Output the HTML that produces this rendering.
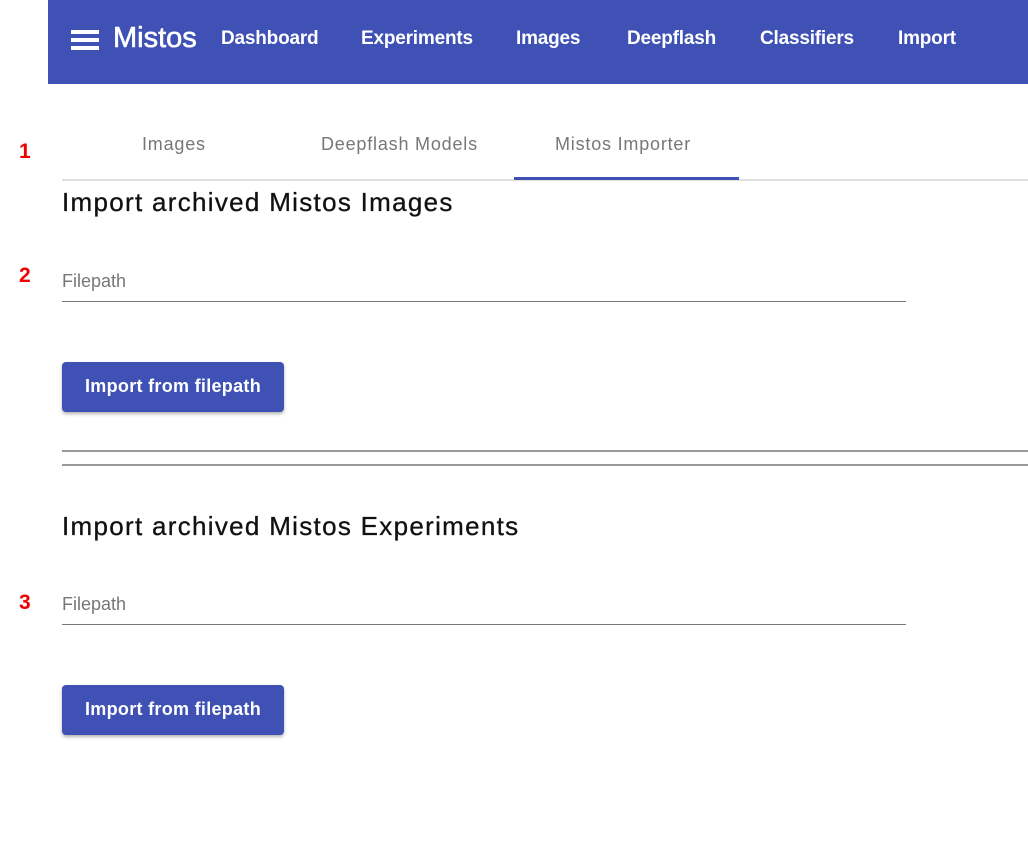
<!DOCTYPE html>
<html><head><style>
body{margin:0;width:1028px;height:857px;background:#fff;font-family:"Liberation Sans",sans-serif;position:relative;overflow:hidden}
.bar{position:absolute;left:48px;top:0;width:980px;height:84px;background:#3f51b5}
.t{position:absolute;white-space:nowrap}
.nav{color:#fff;font-weight:bold;font-size:19px;top:28px;letter-spacing:-0.2px}
.num{color:#e00;font-weight:bold;font-size:21px}
.tab{color:#777;font-size:18px;top:134px;letter-spacing:0.8px}
h2{position:absolute;margin:0;font-weight:normal;font-size:26px;letter-spacing:1.3px;color:#111;left:62px;-webkit-text-stroke:0.3px #111}
.lbl{color:#777;font-size:18px;left:62px}
.line{position:absolute;left:62px;width:844px;height:1px;background:#777}
.btn{position:absolute;left:62px;width:222px;height:50px;background:#3f51b5;border-radius:4px;color:#fff;font-weight:bold;font-size:18px;letter-spacing:0.3px;text-align:center;line-height:49px;box-shadow:0 2px 3px rgba(0,0,0,.3)}
</style></head><body>
<div class="bar"></div>
<div style="position:absolute;left:71px;top:30px;width:28px;height:4px;background:#fff"></div>
<div style="position:absolute;left:71px;top:38px;width:28px;height:4px;background:#fff"></div>
<div style="position:absolute;left:71px;top:46px;width:28px;height:4px;background:#fff"></div>
<div class="t" style="left:113px;top:22px;color:#fff;font-size:29px;-webkit-text-stroke:0.6px #fff">Mistos</div>
<div class="t nav" style="left:221px">Dashboard</div>
<div class="t nav" style="left:361px">Experiments</div>
<div class="t nav" style="left:516px">Images</div>
<div class="t nav" style="left:627px">Deepflash</div>
<div class="t nav" style="left:760px">Classifiers</div>
<div class="t nav" style="left:898px">Import</div>
<div class="t num" style="left:19px;top:140px">1</div>
<div class="t num" style="left:19px;top:264px">2</div>
<div class="t num" style="left:19px;top:591px">3</div>
<div class="t tab" style="left:142px">Images</div>
<div class="t tab" style="left:321px">Deepflash Models</div>
<div class="t tab" style="left:555px">Mistos Importer</div>
<div style="position:absolute;left:62px;top:179px;width:966px;height:2px;background:#e0e0e0"></div>
<div style="position:absolute;left:514px;top:177px;width:225px;height:3px;background:#3f51b5"></div>
<h2 style="top:187px">Import archived Mistos Images</h2>
<div class="t lbl" style="top:271px">Filepath</div>
<div class="line" style="top:301px"></div>
<div class="btn" style="top:362px">Import from filepath</div>
<div style="position:absolute;left:62px;top:450px;width:966px;height:2px;background:#999"></div>
<div style="position:absolute;left:62px;top:464px;width:966px;height:2px;background:#999"></div>
<h2 style="top:511px">Import archived Mistos Experiments</h2>
<div class="t lbl" style="top:594px">Filepath</div>
<div class="line" style="top:624px"></div>
<div class="btn" style="top:685px">Import from filepath</div>
</body></html>
